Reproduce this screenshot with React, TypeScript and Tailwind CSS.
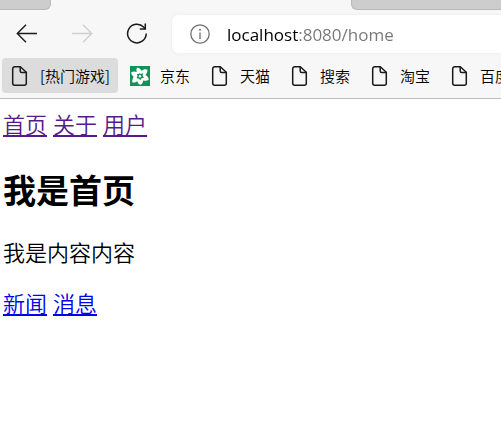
import React from 'react';

const cjk = "font-['Noto_Sans_CJK_SC',sans-serif]";

function PageIcon() {
  return (
    <svg width="20" height="20" viewBox="0 0 20 20" fill="none" stroke="#1a1a1a" strokeWidth="1.5" strokeLinejoin="round" aria-hidden="true">
      <path d="M4.7.8h5.6l6 5.500v10.900a2 2 0 0 1-2 2H4.700a2 2 0 0 1-2-2V2.800a2 2 0 0 1 2-2Z" />
      <path d="M10.200.8v4.200a1.500 1.500 0 0 0 1.500 1.500h4.600" />
    </svg>
  );
}

function StarIcon() {
  return (
    <svg width="20" height="20" viewBox="0 0 20 20" aria-hidden="true">
      <rect width="20" height="20" fill="#109456" />
      <path
        d="M7 1.800C9 1.200 10.500 3 11.500 4.800 13.500 3 16 2.700 17.500 3.800 17.500 6 16.800 7.500 15.500 9 17.500 10.200 19 12 18.700 13.800 17 15 15 14.900 13.200 14.400 13 16.300 12 18.300 10.200 18.700 8.500 18 7.800 16.800 7.200 15.200 5.500 16.500 3.500 17 2.200 16.200 2 14.200 2.700 12.300 3.700 10.800 2 9.500 1 8 1.300 6.300 3 5.200 5 5.300 6.800 6 6.300 4.500 6.300 3 7 1.800Z"
        fill="#fff"
      />
      <path d="m8.500 7 2 1 2.500-.8-.3 2.500 1.300 2-2.400.6-1.300 2-1.500-1.800-2.300-.3 1-2.100-.5-2.200 2 .1Z" fill="#109456" />
      <circle cx="10" cy="10.300" r="1.200" fill="#fff" />
    </svg>
  );
}

function BackIcon() {
  return (
    <svg width="22" height="20" viewBox="0 0 22 20" fill="none" stroke="currentColor" strokeWidth="1.400" aria-hidden="true">
      <path d="M21 9.500H1.500M10 .8 1.300 9.500l8.700 8.700" />
    </svg>
  );
}

function ForwardIcon() {
  return (
    <svg width="22" height="20" viewBox="0 0 22 20" fill="none" stroke="currentColor" strokeWidth="1.400" aria-hidden="true">
      <path d="M1 9.500h19.500M12 .8l8.700 8.700-8.700 8.700" />
    </svg>
  );
}

function ReloadIcon() {
  return (
    <svg width="22" height="22" viewBox="0 0 22 22" fill="none" stroke="currentColor" strokeWidth="1.500" aria-hidden="true">
      <path d="M20.200 10.500a9.300 9.300 0 1 1-2.600-6.400l1.700 1.800" />
      <path d="M19.300.5V6h-5.500" />
    </svg>
  );
}

function InfoIcon() {
  return (
    <svg width="20" height="20" viewBox="0 0 20 20" fill="none" stroke="#707070" strokeWidth="1.300" aria-hidden="true">
      <circle cx="10" cy="10" r="9.200" />
      <path d="M10 8.500V15" />
      <circle cx="10" cy="5.800" r="1" fill="#707070" stroke="none" />
    </svg>
  );
}

const bookmarks = [
  { label: '[热门游戏]', folder: true },
  { label: '京东', star: true },
  { label: '天猫' },
  { label: '搜索' },
  { label: '淘宝' },
  { label: '百度' },
];

export default function App() {
  return (
    <div className={`min-h-screen overflow-hidden bg-white text-black ${cjk}`}>
      <header className="border-b border-[#bdbdbd] bg-[#f7f7f7]">
        <div className="flex h-[10px] justify-between">
          <div className="w-[51px] rounded-br-md border-r border-b border-[#bababa] bg-[#cdcdcd]" />
          <div className="w-[150px] rounded-bl-md border-b border-l border-[#bababa] bg-[#cdcdcd]" />
        </div>
        <div className="flex h-12 items-center pl-4">
          <button type="button" aria-label="Back" className="mr-[33px] text-[#1a1a1a]">
            <BackIcon />
          </button>
          <button type="button" aria-label="Forward" disabled className="mr-[33px] text-[#cfcfcf]">
            <ForwardIcon />
          </button>
          <button type="button" aria-label="Reload" className="mr-6 text-[#1a1a1a]">
            <ReloadIcon />
          </button>
          <div className="flex h-[38px] min-w-0 flex-1 items-center gap-[17px] rounded-l-md bg-white pl-[18px] shadow-[0_0_3px_#e6e6e6]">
            <InfoIcon />
            <input
              type="text"
              aria-label="Address"
              defaultValue="localhost:8080/home"
              className="h-7 min-w-0 flex-1 bg-linear-[90deg,#000_71px,#767676_71px] bg-clip-text font-['Open_Sans',sans-serif] text-[17px] text-transparent caret-black outline-none"
            />
          </div>
        </div>
        <nav aria-label="Bookmarks" className="flex h-10 items-start overflow-hidden pl-[2px]">
          {bookmarks.map((b) => (
            <a
              key={b.label}
              href="#"
              className={`mr-1 flex h-[35px] shrink-0 items-center gap-[10px] rounded-sm px-2 text-[15px] leading-5 font-[350] whitespace-nowrap ${b.folder ? 'bg-[#dcdcdc]' : ''}`}
            >
              {b.star ? <StarIcon /> : <PageIcon />}
              {b.label}
            </a>
          ))}
        </nav>
      </header>
      <main className="px-[3px] pt-[10px] text-[22px] leading-7 font-[350]">
        <nav aria-label="Main" className="flex gap-[6px] text-[#551a8b] underline">
          <a href="#home">首页</a>
          <a href="#about">关于</a>
          <a href="#user">用户</a>
        </nav>
        <h1 className="mt-[30px] text-[33px] leading-11 font-bold">我是首页</h1>
        <p className="mt-[26px]">我是内容内容</p>
        <nav aria-label="Content" className="mt-[23px] flex gap-[6px] text-[#0000ee] underline">
          <a href="#news">新闻</a>
          <a href="#message">消息</a>
        </nav>
      </main>
    </div>
  );
}
